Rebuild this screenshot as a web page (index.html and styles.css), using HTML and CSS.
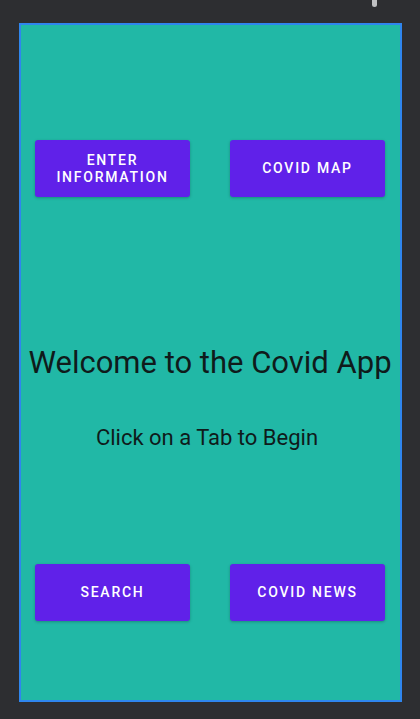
FILE: index.html
```html
<!DOCTYPE html>
<html>
<head>
<meta charset="utf-8">
<link rel="stylesheet" href="styles.css">
</head>
<body>
<div class="scroll-thumb"></div>
<div class="panel">
  <div class="row row-top">
    <button class="btn">ENTER<br>INFORMATION</button>
    <button class="btn">COVID MAP</button>
  </div>
  <h1 class="title">Welcome to the Covid App</h1>
  <p class="subtitle">Click on a Tab to Begin</p>
  <div class="row row-bottom">
    <button class="btn">SEARCH</button>
    <button class="btn">COVID NEWS</button>
  </div>
</div>
</body>
</html>
```

FILE: styles.css
```css
html, body {
  margin: 0;
  padding: 0;
  background: #2d2e31;
  width: 420px;
  height: 719px;
  overflow: hidden;
  font-family: Roboto, "Liberation Sans", sans-serif;
}
body {
  position: relative;
  padding-top: 23px;
  box-sizing: border-box;
}
.scroll-thumb {
  position: absolute;
  left: 372px;
  top: -3px;
  width: 5px;
  height: 10px;
  border-radius: 3px;
  background: #bfc0c2;
}
.panel {
  margin-left: 19px;
  width: 383px;
  height: 679px;
  box-sizing: border-box;
  border: 2px solid #2f86ee;
  background: #21b8a6;
  display: flex;
  flex-direction: column;
  align-items: stretch;
  padding: 115px 15px 0 14px;
}
.row {
  display: grid;
  grid-template-columns: 155px 155px;
  column-gap: 40px;
}
.btn {
  height: 57px;
  border: none;
  border-radius: 3px;
  background: #6021e9;
  color: #ffffff;
  font-family: Roboto, "Liberation Sans", sans-serif;
  font-weight: 500;
  font-size: 14px;
  letter-spacing: 1.75px;
  line-height: 17px;
  padding: 0 4px;
  box-shadow: 0 1px 3px rgba(0,0,0,0.25);
}
.title {
  margin: 148px -14px 0 -14px;
  font-weight: 400;
  font-size: 31px;
  line-height: 36px;
  color: #0f1b1b;
  text-align: center;
  white-space: nowrap;
}
.subtitle {
  margin: 44px 0 0 0;
  font-size: 22px;
  line-height: 26px;
  color: #0f1b1b;
  text-align: center;
  padding-right: 6px;
}
.row-bottom {
  margin-top: 113px;
}
```
